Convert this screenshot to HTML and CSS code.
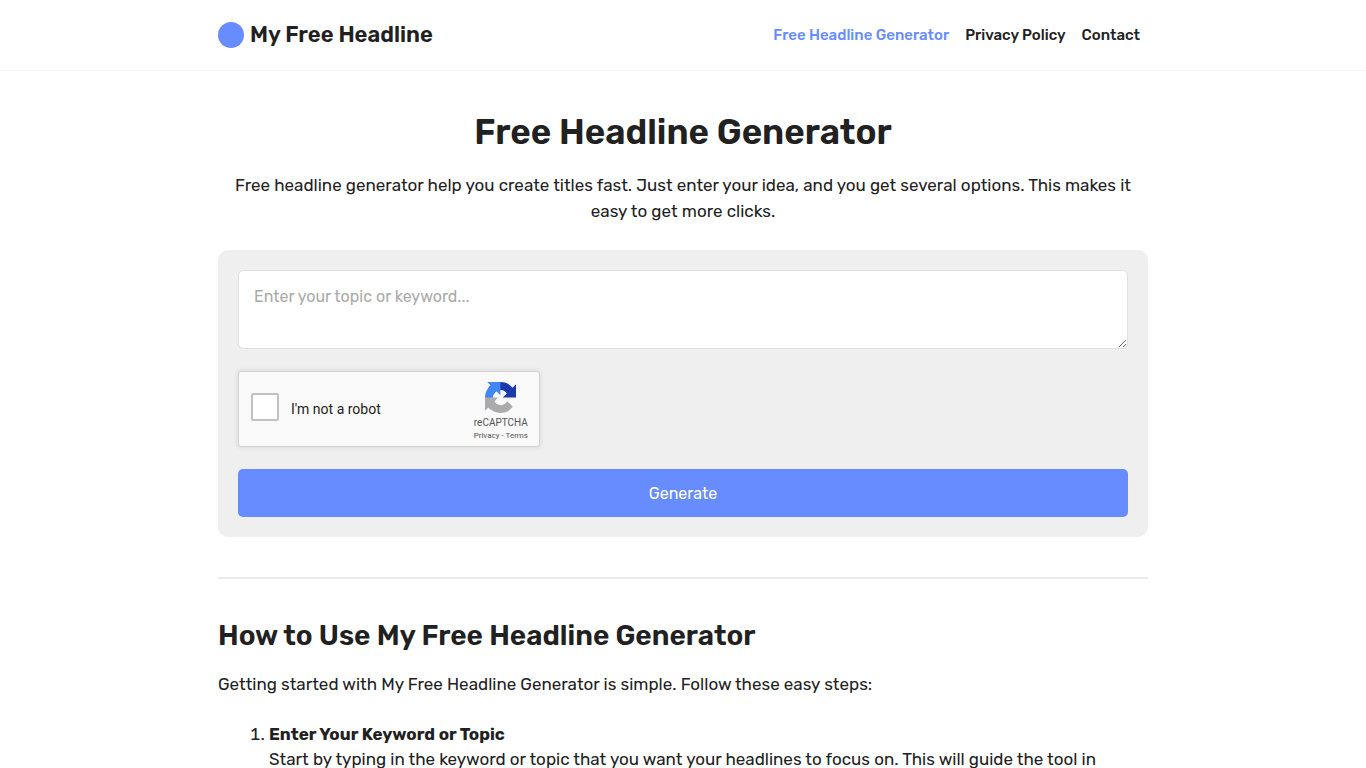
FILE: index.html
```
<!DOCTYPE html>
<html lang="en">
<head>
    <meta charset="UTF-8">
    <meta name="viewport" content="width=device-width, initial-scale=1.0">
    <title>Free Headline Generator</title>
    <link rel="stylesheet" href="styles.css">
</head>
<body>
    <header class="site-header">
        <div class="container header-inner">
            <a href="#" class="logo"><span class="logo-dot"></span>My Free Headline</a>
            <nav class="site-nav">
                <a href="#" class="active">Free Headline Generator</a>
                <a href="#">Privacy Policy</a>
                <a href="#">Contact</a>
            </nav>
        </div>
    </header>

    <main class="container">
        <section class="intro">
            <h1>Free Headline Generator</h1>
            <p>Free headline generator help you create titles fast. Just enter your idea, and you get several options. This makes it easy to get more clicks.</p>
        </section>

        <form class="generator">
            <textarea class="topic" aria-label="Topic or keyword" placeholder="Enter your topic or keyword..."></textarea>
            <div class="captcha">
                <input type="checkbox" id="robot">
                <label for="robot">I'm not a robot</label>
                <div class="captcha-brand">
                    <svg width="31" height="31" viewBox="0 0 64 64" aria-hidden="true">
                        <path fill="#1c3aa9" d="M64 31.955l-.012-1.37V4.687l-7.16 7.16C50.968 4.674 42.053.093 32.067.093c-10.392 0-19.624 4.96-25.458 12.64l11.736 11.86a15.55 15.55 0 0 1 4.754-5.334c2.05-1.6 4.952-2.906 8.968-2.906.485 0 .86.057 1.135.163 4.976.393 9.288 3.14 11.828 7.124l-8.307 8.307L64 31.953z"/>
                        <path fill="#4285f4" d="M31.862.094l-1.37.012H4.594l7.16 7.16C4.58 13.127 0 22.04 0 32.027c0 10.392 4.96 19.624 12.64 25.458L24.5 45.749a15.55 15.55 0 0 1-5.334-4.754c-1.6-2.05-2.906-4.952-2.906-8.968 0-.485.057-.86.163-1.135.393-4.976 3.14-9.288 7.124-11.828l8.307 8.307L31.86.095z"/>
                        <path fill="#ababab" d="M.001 32.045l.012 1.37v25.898l7.16-7.16c5.86 7.173 14.774 11.754 24.76 11.754 10.392 0 19.624-4.96 25.458-12.64L45.655 39.531a15.55 15.55 0 0 1-4.754 5.334c-2.05 1.6-4.952 2.906-8.968 2.906-.485 0-.86-.057-1.135-.163-4.976-.393-9.288-3.14-11.828-7.124l8.307-8.307L.001 32.045z"/>
                    </svg>
                    <span class="captcha-name">reCAPTCHA</span>
                    <span class="captcha-links"><a href="#">Privacy</a> - <a href="#">Terms</a></span>
                </div>
            </div>
            <button type="submit" class="generate">Generate</button>
        </form>

        <hr>

        <section class="guide">
            <h2>How to Use My Free Headline Generator</h2>
            <p>Getting started with My Free Headline Generator is simple. Follow these easy steps:</p>
            <ol>
                <li><strong>Enter Your Keyword or Topic</strong><br>Start by typing in the keyword or topic that you want your headlines to focus on. This will guide the tool in</li>
            </ol>
        </section>
    </main>
</body>
</html>
```

FILE: styles.css
```
* {
    box-sizing: border-box;
}

body {
    margin: 0;
    background-color: #fff;
    color: #212121;
    font-family: Rubik, Roboto, sans-serif;
    font-size: 17px;
    line-height: 26px;
}

a {
    color: inherit;
    text-decoration: none;
}

.container {
    width: 100%;
    max-width: 930px;
    margin: 0 auto;
}

.site-header {
    border-bottom: 1px solid #f5f5f5;
}

.header-inner {
    display: flex;
    align-items: center;
    justify-content: space-between;
    padding: 22px 0;
}

.logo {
    display: flex;
    align-items: center;
    gap: 6px;
    font-size: 22px;
    font-weight: 600;
}

.logo-dot {
    width: 26px;
    height: 26px;
    border-radius: 50%;
    background-color: #668cff;
}

.site-nav {
    display: flex;
    gap: 16px;
    padding-right: 8px;
    font-size: 15px;
    font-weight: 500;
}

.site-nav .active {
    color: #668cff;
}

.intro {
    padding-top: 40px;
    text-align: center;
}

h1 {
    margin: 0 0 19px;
    font-size: 35px;
    line-height: 42px;
    font-weight: 600;
}

p {
    margin: 0;
}

.generator {
    display: flex;
    flex-direction: column;
    margin-top: 26px;
    padding: 20px;
    border-radius: 10px;
    background-color: #efefef;
}

.topic {
    height: 79px;
    padding: 14px 15px;
    border: 1px solid #e0e0e0;
    border-radius: 5px;
    background-color: #fff;
    font-family: inherit;
    font-size: 16px;
    line-height: 24px;
    resize: vertical;
}

.topic::placeholder {
    color: #aaa;
}

/* captcha box */
.captcha {
    display: flex;
    align-items: center;
    width: 302px;
    height: 76px;
    margin: 22px 0;
    padding: 0 11px 0 12px;
    border: 1px solid #d3d3d3;
    border-radius: 3px;
    background-color: #f9f9f9;
    box-shadow: 0 0 4px 1px rgba(0, 0, 0, 0.08);
    font-family: Roboto, sans-serif;
}

.captcha input {
    appearance: none;
    width: 28px;
    height: 28px;
    margin: 0 12px 4px 0;
    border: 2px solid #c1c1c1;
    border-radius: 2px;
    background-color: #fff;
}

.captcha label {
    flex: 1;
    color: #222;
    font-size: 14px;
    line-height: 18px;
}

.captcha-brand {
    display: flex;
    flex-direction: column;
    align-items: center;
    padding-top: 6px;
    color: #555;
}

.captcha-name {
    margin-top: 3px;
    font-size: 10px;
    line-height: 14px;
}

.captcha-links {
    font-size: 8px;
    line-height: 12px;
}

.generate {
    height: 48px;
    border: none;
    border-radius: 5px;
    background-color: #668cff;
    color: #fff;
    font-family: inherit;
    font-size: 16px;
}

hr {
    height: 2px;
    margin: 40px 0;
    border: none;
    background-color: #ebebeb;
}

h2 {
    margin: 0 0 18px;
    font-size: 28px;
    line-height: 34px;
    font-weight: 600;
}

ol {
    margin: 25px 0;
    padding-left: 51px;
    line-height: 25px;
}
```
